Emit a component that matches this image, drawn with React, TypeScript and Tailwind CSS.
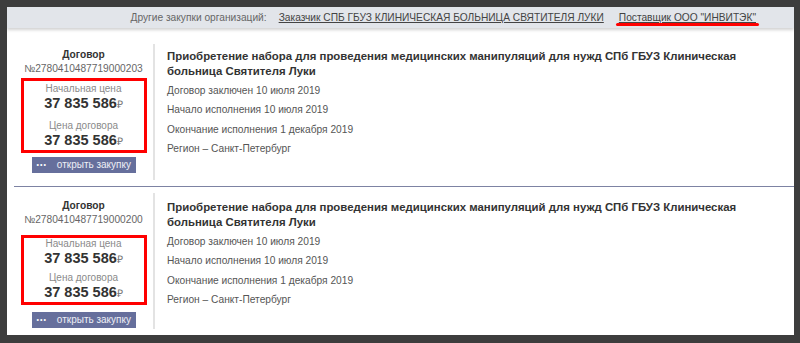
const records = [
  {
    num: "№2780410487719000203",
    head: "pt-[4px]",
    box: "mt-[2px] pt-[2px] pb-[1px] gap-[8px]",
    btn: "mt-[4px]",
    right: "pt-[5px]",
  },
  {
    num: "№2780410487719000200",
    head: "pt-[6px]",
    box: "mt-[8px] pt-0 pb-[1px] gap-[5px]",
    btn: "mt-[7px]",
    right: "pt-[7px]",
  },
];

function Price({ label }: { label: string }) {
  return (
    <div className="flex flex-col items-center">
      <div className="text-[10px] leading-[12px] text-[#8a8a8a]">{label}</div>
      <div className="leading-[16px] text-[#333]">
        <span className="text-[14.5px] font-bold">37 835 586</span>
        <span className="text-[10.5px] text-[#777]">₽</span>
      </div>
    </div>
  );
}

function Record({ r, last }: { r: (typeof records)[number]; last: boolean }) {
  return (
    <div
      className={
        "ml-[7px] flex " +
        (last ? "pt-[6px] h-[149px]" : "pt-[16px] pb-[6px] h-[159px] border-b border-[#7d83a3]")
      }
    >
      <div className={"w-[139px] flex flex-col items-center " + r.head}>
        <div className="text-[10.2px] leading-[14px] font-bold text-[#333]">Договор</div>
        <div className="text-[10.2px] leading-[14px] text-[#666]">{r.num}</div>
        <div className={"w-[126px] border-[3px] border-[#ff0000] flex flex-col " + r.box}>
          <Price label="Начальная цена" />
          <Price label="Цена договора" />
        </div>
        <div
          className={
            "w-[104px] h-[16px] bg-[#666f9c] text-white text-[10px] leading-[16px] flex items-center px-[5px] whitespace-nowrap " +
            r.btn
          }
        >
          <span className="text-[7px] tracking-[1px]">•••</span>
          <span className="ml-[10px] text-[#eef0f6]">открыть закупку</span>
        </div>
      </div>
      <div className="w-[2px] bg-[#e3e3e3] h-[136px]" />
      <div className={"pl-[12px] pr-[20px] flex-1 " + r.right}>
        <div className="text-[11.4px] leading-[15px] font-bold text-[#333]">
          Приобретение набора для проведения медицинских манипуляций для нужд СПб ГБУЗ Клиническая
          больница Святителя Луки
        </div>
        <div className="mt-[2px] text-[10.2px] leading-[19.5px] text-[#555]">
          <div>Договор заключен 10 июля 2019</div>
          <div>Начало исполнения 10 июля 2019</div>
          <div>Окончание исполнения 1 декабря 2019</div>
          <div>Регион – Санкт-Петербург</div>
        </div>
      </div>
    </div>
  );
}

export default function App() {
  return (
    <div
      className="w-[800px] h-[343px] bg-[#3d3d3d] pt-[7px] pl-[7px] pr-[6px] pb-[8px]"
      style={{ fontFamily: '"Liberation Sans", Arial, sans-serif' }}
    >
      <div className="bg-white h-full flex flex-col overflow-hidden">
        <div className="h-[21px] bg-[#e2e5ea] shadow-[0_2px_3px_rgba(0,0,0,0.18)] flex items-center justify-end pr-[38px] text-[10.2px] relative z-10">
          <span className="text-[#666]">Другие закупки организаций:</span>
          <span className="ml-[12px] underline text-[#444]">
            Заказчик СПБ ГБУЗ КЛИНИЧЕСКАЯ БОЛЬНИЦА СВЯТИТЕЛЯ ЛУКИ
          </span>
          <span className="ml-[15px] relative underline text-[#444]">
            Поставщик ООО "ИНВИТЭК"
            <span className="absolute left-[-3px] right-[-3px] top-[13px] h-[3px] bg-[#ff0000] rounded-full" />
          </span>
        </div>
        {records.map((r, i) => (
          <Record key={i} r={r} last={i === records.length - 1} />
        ))}
      </div>
    </div>
  );
}
